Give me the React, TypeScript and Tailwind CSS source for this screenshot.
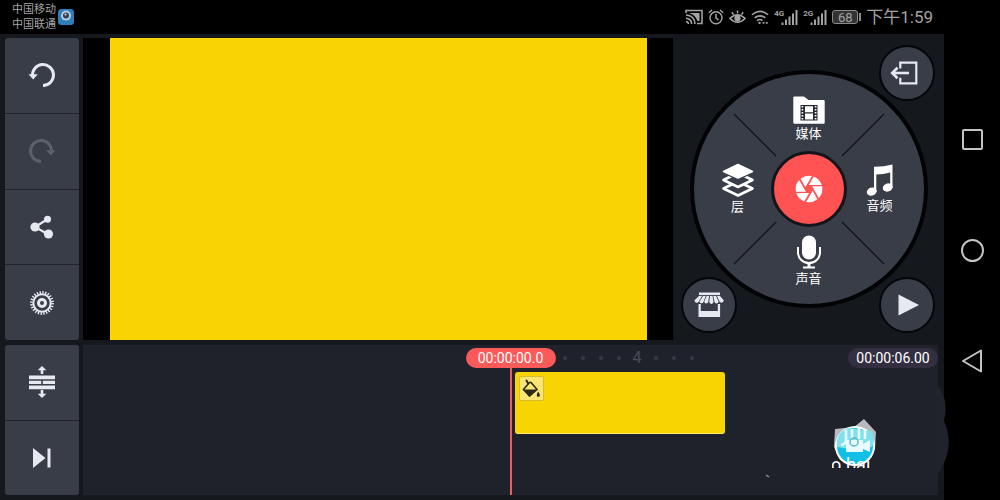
import type { ReactNode } from "react";
import { MdCamera } from "react-icons/md";
import clsx from "clsx";

const FONT = "font-[Roboto,'Noto_Sans_CJK_SC',sans-serif]";

type IconProps = { className?: string };

function UndoIcon({ className }: IconProps) {
  return (
    <svg viewBox="0 0 28 26" className={clsx("h-[26px] w-7", className)} aria-hidden="true">
      <path d="M4.6 14.6A10.5 10.5 0 1 1 15 23.5" fill="none" stroke="currentColor" strokeWidth="3" />
      <path d="M0.5 12.3H9.8L5.2 17.6Z" fill="currentColor" />
    </svg>
  );
}

function ShareIcon() {
  return (
    <svg viewBox="0 0 24 24" className="size-6" aria-hidden="true">
      <path d="M17 4.500L5 12l13.500 7.500" fill="none" stroke="currentColor" strokeWidth="2.200" />
      <circle cx="17.500" cy="4.300" r="3.500" fill="currentColor" />
      <circle cx="5" cy="12" r="4.600" fill="currentColor" />
      <circle cx="18.500" cy="19" r="4.600" fill="currentColor" />
    </svg>
  );
}

function GearIcon() {
  return (
    <svg viewBox="0 0 24 24" className="size-6" fill="none" stroke="currentColor" aria-hidden="true">
      <circle cx="12" cy="12" r="10.600" strokeWidth="2.600" strokeDasharray="1.387 1.387" />
      <circle cx="12" cy="12" r="8.700" strokeWidth="2" />
      <circle cx="12" cy="12" r="3.500" strokeWidth="3" />
    </svg>
  );
}

function TracksIcon() {
  return (
    <svg viewBox="0 0 28 32" className="h-8 w-7" fill="currentColor" aria-hidden="true">
      <path d="M14 0l4.300 4.300h-3V8h-2.600V4.300h-3zM14 32l4.300-4.300h-3V24h-2.600v3.700h-3z" />
      <path d="M1 9.500h26v3.700H1zM1 14.700h12.200v3.200H1zM14.800 14.700H27v3.200H14.800zM1 19.600h26v3.700H1z" />
    </svg>
  );
}

function JumpEndIcon() {
  return (
    <svg viewBox="0 0 20 20" className="size-5" fill="currentColor" aria-hidden="true">
      <path d="M1 0l12.500 10L1 20zM15.500 0.500h3v19h-3z" />
    </svg>
  );
}

function ExitIcon() {
  return (
    <svg viewBox="0 0 34 24" className="h-6 w-[34px]" fill="none" stroke="currentColor" aria-hidden="true">
      <path d="M10.300 7.500V1.600h16v20.800h-16v-5.700" strokeWidth="2.200" />
      <path d="M19 12H3" strokeWidth="2.600" />
      <path d="M7.500 6.800L2.200 12l5.300 5.200" strokeWidth="2.600" />
    </svg>
  );
}

function StoreIcon() {
  return (
    <svg viewBox="0 0 30 26" className="h-[26px] w-[30px]" fill="currentColor" aria-hidden="true">
      <path d="M5 0.500h21v2.600H5z" />
      <path d="M5 4h3L4.800 9.600a2.300 2.300 0 0 1-4.300-1.300zM9 4h2.700L9.600 9.800a2.200 2.200 0 0 1-4.200 0zM12.600 4h2.500l-.8 5.800a2.100 2.100 0 0 1-4.100 0zM16 4h2.500l1 5.800a2.100 2.100 0 0 1-4.200 0zM19.300 4h2.800l2.600 5.800a2.200 2.200 0 0 1-4.300 0zM23 4h3l3.700 4.300a2.300 2.300 0 0 1-4.200 1.300z" />
      <path d="M4.500 12h2.300v7h17v-7h2.300v13H4.500z" />
    </svg>
  );
}

function MediaIcon() {
  return (
    <svg viewBox="0 0 32 28" className="h-7 w-8" aria-hidden="true">
      <path d="M1.500 0.500h9.500l4.500 3.500h15q1.200 0 1.200 1.200v21.300q0 1.200-1.200 1.200h-29q-1.200 0-1.200-1.200v-25q0-1 1.200-1z" fill="#fff" />
      <path d="M7.500 9h17v15.500h-17z" fill="#262932" />
      <path d="M12 10.200h8v6h-8zM12 17.500h8v6h-8z" fill="#fff" />
      <path d="M9.400 9.900v14.500M22.600 9.900v14.500" stroke="#fff" strokeWidth="1.700" strokeDasharray="1.700 1.300" />
    </svg>
  );
}

function LayersIcon() {
  return (
    <svg viewBox="0 0 34 34" className="size-[34px]" fill="#383d48" stroke="#fff" strokeWidth="2.600" strokeLinejoin="round" aria-hidden="true">
      <path d="M17 18.500L31.500 25.500 17 32.500 2.500 25.500z" />
      <path d="M17 10L31.500 17 17 24 2.500 17z" />
      <path d="M17 0.500L34.500 9 17 17.500-0.500 9z" stroke="none" />
      <path d="M17 1.500L31.500 8.500 17 15 2.500 8.500z" fill="#fff" strokeWidth="1.500" />
    </svg>
  );
}

function MusicIcon() {
  return (
    <svg viewBox="0 0 28 32" className="h-8 w-7" fill="#fff" aria-hidden="true">
      <path d="M8 2.800Q17 3 26.500 0.500V24h-2.300V8.500Q17 10.500 10.300 10.600V28H8z" />
      <ellipse cx="5.700" cy="27.600" rx="5" ry="4" transform="rotate(-20 5.700 27.600)" />
      <ellipse cx="21.700" cy="23.500" rx="5" ry="4" transform="rotate(-20 21.700 23.500)" />
    </svg>
  );
}

function MicIcon() {
  return (
    <svg viewBox="0 0 26 34" className="h-[34px] w-[26px]" aria-hidden="true">
      <rect x="6" y="0.500" width="14" height="24" rx="7" fill="#fff" />
      <path d="M2 12v5.500a11 10.500 0 0 0 22 0V12" fill="none" stroke="#fff" strokeWidth="2" />
      <path d="M11.500 28h3v3.500h4.500V33.500H7v-2h4.500z" fill="#fff" />
    </svg>
  );
}

function FillIcon() {
  return (
    <svg viewBox="0 0 20 20" className="size-5" aria-hidden="true">
      <path d="M5.500 1.500l1.500 2.700" stroke="#2f2a12" strokeWidth="2" strokeLinecap="round" />
      <path d="M8.500 3.500L2.500 10.500 8.500 17l7.500-6.500-6-7z" fill="none" stroke="#2f2a12" strokeWidth="1.600" />
      <path d="M2 10.500h14l-7.500 7.500z" fill="#2f2a12" />
      <path d="M17.300 12.500q2.200 3 1.500 4.400a1.700 1.700 0 0 1-3 0q-.6-1.400 1.500-4.400z" fill="#2f2a12" />
    </svg>
  );
}

function SignalIcon({ label }: { label: string }) {
  return (
    <span className="flex items-start">
      <span className="-mr-[3px] text-[8px] leading-[9px] font-bold">{label}</span>
      <svg viewBox="0 0 17 16" className="h-4 w-[17px]" fill="currentColor" aria-hidden="true">
        <path d="M0.500 13.500h2V16h-2zM4 10.500h2V16H4zM7.500 7.500h2V16h-2zM11 4.500h2V16h-2zM14.500 1h2v15h-2z" />
      </svg>
    </span>
  );
}

function StatusBar() {
  return (
    <header className="flex h-[34px] shrink-0 items-center justify-between bg-black pr-[11px] pl-3 text-[#a3a3a3]">
      <div className="flex items-center gap-0.5">
        <div className="text-[11px] leading-[15px]">
          <p>中国移动</p>
          <p>中国联通</p>
        </div>
        <svg viewBox="0 0 16 16" className="size-4" aria-hidden="true">
          <rect width="16" height="16" rx="3.500" fill="#2c7fba" />
          <circle cx="8" cy="6.600" r="5" fill="#b9c9dc" />
          <circle cx="8" cy="6.600" r="3" fill="#33415c" />
          <circle cx="7.500" cy="5.600" r="1" fill="#d5deea" />
        </svg>
      </div>
      <div className="flex items-center gap-[5px]">
        <svg viewBox="0 0 18 16" className="h-4 w-[18px]" fill="none" stroke="currentColor" strokeWidth="1.600" aria-hidden="true">
          <path d="M1 4V1.500h16v13h-5M1 6q8.500.5 9 9M1 9.300q5.200.4 5.700 5.700M1 12.500q2.300.2 2.500 2.500" />
          <path d="M5 4h9.500v8H12.500Q10.500 6 5 4.500z" fill="currentColor" stroke="none" />
        </svg>
        <svg viewBox="0 0 16 16" className="size-4" fill="none" stroke="currentColor" strokeWidth="1.500" aria-hidden="true">
          <circle cx="8" cy="8.700" r="6" />
          <path d="M8 5v4l2.500 1.800M0.800 3.800l3.200-2.800M15.200 3.800L12 1" />
        </svg>
        <svg viewBox="0 0 18 16" className="h-4 w-[17px]" fill="none" stroke="currentColor" strokeWidth="1.600" aria-hidden="true">
          <path d="M1 9.500Q9 2 17 9.500 9 17.500 1 9.500zM9 1v3M3 3l1.800 2.500M15 3l-1.800 2.500" />
          <circle cx="9" cy="9.500" r="2.500" fill="currentColor" />
        </svg>
        <svg viewBox="0 0 20 16" className="h-4 w-[18px]" fill="none" stroke="currentColor" strokeWidth="1.800" aria-hidden="true">
          <path d="M1 5.500Q10-2 19 5.500M4 9q6-4.500 12 0M6.700 12q3.300-2.400 6 0" />
          <circle cx="9.500" cy="14.500" r="1.300" fill="currentColor" stroke="none" />
          <path d="M13 14.500h2M16.500 14.500h2" />
        </svg>
        <SignalIcon label="4G" />
        <SignalIcon label="2G" />
        <span className="flex items-center">
          <span className="flex h-[14px] w-[26px] items-center justify-center rounded-[3px] border border-[#8b8b8b] bg-[#333] text-[13px] leading-none">
            68
          </span>
          <span className="ml-px h-2 w-0.5 bg-[#8b8b8b]" />
        </span>
        <time className="text-[17px] leading-5">下午1:59</time>
      </div>
    </header>
  );
}

type ToolProps = { label: string; children: ReactNode; disabled?: boolean };

function ToolButton({ label, children, disabled }: ToolProps) {
  return (
    <button
      type="button"
      aria-label={label}
      disabled={disabled}
      className="flex flex-1 items-center justify-center text-[#e6e9ef] disabled:text-[#5c606b]"
    >
      {children}
    </button>
  );
}

function ToolGroup({ children }: { children: ReactNode }) {
  return (
    <div className="flex flex-col divide-y divide-[#20232b] overflow-hidden rounded-[3px] bg-[#383d48]">
      {children}
    </div>
  );
}

function WheelButton({ label, icon, className }: { label: string; icon: ReactNode; className: string }) {
  return (
    <button
      type="button"
      className={clsx("relative flex flex-col items-center justify-center gap-0.5 text-[13px] leading-4 whitespace-nowrap text-white", className)}
    >
      {icon}
      {label}
    </button>
  );
}

function RoundButton({ label, children, className }: { label: string; children: ReactNode; className: string }) {
  return (
    <button
      type="button"
      aria-label={label}
      className={clsx(
        "absolute flex size-14 items-center justify-center rounded-full border-2 border-[#05060a] bg-[#383d48] text-[#e6e9ef]",
        className,
      )}
    >
      {children}
    </button>
  );
}

function ControlPanel() {
  return (
    <section className="relative flex w-[271px] shrink-0 items-center justify-center">
      <div className="relative grid size-[238px] grid-cols-[66px_76px_66px] grid-rows-[66px_76px_66px] place-content-center rounded-full border-4 border-[#020305] bg-[#383d48]">
        <svg viewBox="0 0 230 230" className="absolute inset-0 size-full" stroke="#14161c" strokeWidth="1.500" aria-hidden="true">
          <path d="M40 40l42 42M190 40l-42 42M40 190l42-42M190 190l-42-42" />
        </svg>
        <WheelButton label="媒体" icon={<MediaIcon />} className="col-start-2 row-start-1 pt-0.5" />
        <WheelButton label="层" icon={<LayersIcon />} className="col-start-1 row-start-2" />
        <button
          type="button"
          aria-label="Record"
          className="relative col-start-2 row-start-2 flex items-center justify-center rounded-full border-[3px] border-[#14151b] bg-[#ff5252] text-white"
        >
          <MdCamera className="size-8" />
        </button>
        <WheelButton label="音频" icon={<MusicIcon />} className="col-start-3 row-start-2" />
        <WheelButton label="声音" icon={<MicIcon />} className="col-start-2 row-start-3 pt-0.5" />
      </div>
      <RoundButton label="Exit" className="top-[7px] right-[9px]">
        <ExitIcon />
      </RoundButton>
      <RoundButton label="Store" className="bottom-[7px] left-2">
        <StoreIcon />
      </RoundButton>
      <RoundButton label="Play" className="right-[9px] bottom-[7px]">
        <svg viewBox="0 0 22 22" className="ml-1 size-[22px]" fill="currentColor" aria-hidden="true">
          <path d="M0.500 0.500L21 11 0.500 21.500z" />
        </svg>
      </RoundButton>
    </section>
  );
}

function Dots({ count }: { count: number }) {
  return Array.from({ length: count }, (_, i) => (
    <span key={i} className="flex w-[18px] justify-center">
      <span className="size-1 rounded-full bg-[#373a46]" />
    </span>
  ));
}

// Leftover floating badge sitting over the lower right of the timeline.
function FloatingBadge() {
  return (
    <svg viewBox="0 0 190 100" className="absolute right-[-12px] bottom-2 h-[100px] w-[190px]" aria-hidden="true">
      <defs>
        <clipPath id="badge-caption">
          <rect x="72" y="70" width="45" height="11" />
        </clipPath>
      </defs>
      <path d="M176 0h3Q189 14 184 34 194 56 183 78L176 90z" fill="#20222c" />
      <path d="M6 88l3 2" stroke="#8f9298" strokeWidth="1.500" />
      <path d="M75 42l19-2 10-8 12 13-1 17-6 11H80L74 60z" fill="#b7b9bc" />
      <circle cx="95" cy="59" r="20" fill="#fff" />
      <circle cx="95" cy="59" r="18" fill="#12bfe6" />
      <path d="M77 60Q75 46 88 41l24 3q4 8 0 16-17 4-35 0z" fill="#7fe0ee" />
      <path d="M86 43v10q0 4-5 5M92 42v10M99 41v11M105 42v10" stroke="#e8fbff" strokeWidth="2.600" fill="none" />
      <path d="M86 53h17v4l7-4v12l-7-3v3H86z" fill="#e8fbff" />
      <circle cx="94" cy="55" r="4" fill="none" stroke="#5fb9c9" strokeWidth="1.500" />
      <text x="71" y="84" fontSize="18" fill="#fff" clipPath="url(#badge-caption)">
        o.bai
      </text>
    </svg>
  );
}

function Timeline() {
  return (
    <section className="relative bg-[#20222b]">
      <div className="grid grid-cols-[1fr_90px_1fr] items-center pt-[3px]">
        <span className="col-start-2 flex h-5 items-center justify-center rounded-full bg-[#fb5a5a] text-sm text-white">
          00:00:00.0
        </span>
        <div className="flex items-center">
          <Dots count={4} />
          <span className="w-[19px] text-center text-base leading-5 text-[#4a4d59]">4</span>
          <Dots count={3} />
          <span className="ml-auto flex h-5 w-[90px] items-center justify-center rounded-full bg-[#332f41] text-sm text-white">
            00:00:06.00
          </span>
        </div>
      </div>
      <div className="mt-1 pl-[calc(50%+4px)]">
        <div className="h-[62px] w-[210px] rounded-[3px] border-b border-[#ffe96a] bg-[#f9d403] p-1">
          <span className="flex size-[25px] items-center justify-center rounded-xs border border-[#d9bd2a] bg-[#fbe574]">
            <FillIcon />
          </span>
        </div>
      </div>
      <div className="absolute top-[22px] bottom-0 left-1/2 -ml-px w-0.5 bg-[#e85f60]" />
      <FloatingBadge />
    </section>
  );
}

function SystemNav() {
  const button = "flex h-[111px] w-full items-center justify-center text-[#c4c4c4]";
  return (
    <nav className="flex w-14 shrink-0 flex-col items-center justify-center bg-black" aria-label="System">
      <button type="button" aria-label="Recents" className={button}>
        <span className="size-[21px] rounded-xs border-2 border-current" />
      </button>
      <button type="button" aria-label="Home" className={button}>
        <span className="size-[23px] rounded-full border-2 border-current" />
      </button>
      <button type="button" aria-label="Back" className={button}>
        <svg viewBox="0 0 22 24" className="h-6 w-[22px]" fill="none" stroke="currentColor" strokeWidth="2" strokeLinejoin="round" aria-hidden="true">
          <path d="M20 1.500v21L2 12z" />
        </svg>
      </button>
    </nav>
  );
}

export default function App() {
  return (
    <div className={clsx("flex h-screen overflow-hidden bg-black", FONT)}>
      <div className="flex min-w-0 flex-1 flex-col">
        <StatusBar />
        <main className="grid min-h-0 flex-1 grid-cols-[74px_1fr] grid-rows-[1fr_150px] gap-x-1 gap-y-[5px] bg-[#15181d] pt-1 pb-[5px] pl-[5px]">
          <ToolGroup>
            <ToolButton label="Undo">
              <UndoIcon />
            </ToolButton>
            <ToolButton label="Redo" disabled>
              <UndoIcon className="-scale-x-100" />
            </ToolButton>
            <ToolButton label="Share">
              <ShareIcon />
            </ToolButton>
            <ToolButton label="Settings">
              <GearIcon />
            </ToolButton>
          </ToolGroup>
          <div className="flex min-w-0">
            <section className="flex flex-1 bg-black pr-[26px] pl-[27px]" aria-label="Preview">
              <div className="flex-1 bg-[#f9d304]" />
            </section>
            <ControlPanel />
          </div>
          <ToolGroup>
            <ToolButton label="Expand tracks">
              <TracksIcon />
            </ToolButton>
            <ToolButton label="Jump to end">
              <JumpEndIcon />
            </ToolButton>
          </ToolGroup>
          <div className="pr-1.5 *:h-full">
            <Timeline />
          </div>
        </main>
      </div>
      <SystemNav />
    </div>
  );
}
